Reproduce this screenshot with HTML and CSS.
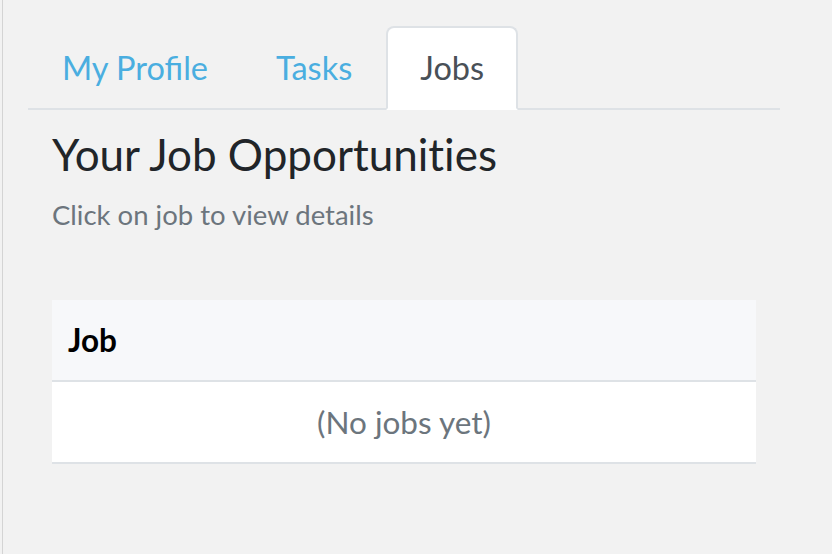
FILE: index.html
```html
<!DOCTYPE html>
<html>
<head>
<meta charset="utf-8">
<link rel="stylesheet" href="styles.css">
</head>
<body>
<div class="frame">
  <div class="panel">
    <ul class="tabs">
      <li class="tab">My Profile</li>
      <li class="tab">Tasks</li>
      <li class="tab active">Jobs</li>
    </ul>
    <div class="content">
      <h2 class="title">Your Job Opportunities</h2>
      <p class="subtitle">Click on job to view details</p>
      <table class="jobs">
        <thead><tr><th>Job</th></tr></thead>
        <tbody><tr><td class="empty">(No jobs yet)</td></tr></tbody>
      </table>
    </div>
  </div>
</div>
</body>
</html>
```
FILE: styles.css
```css
* { box-sizing: border-box; }
html, body { margin: 0; padding: 0; }
body {
  background: #f2f2f2;
  font-family: Lato, "Open Sans", sans-serif;
  width: 832px;
  height: 554px;
  overflow: hidden;
}
.frame {
  margin-left: 2px;
  border-left: 1px solid #d4d4d4;
  height: 554px;
  padding-top: 26px;
}
.panel {
  margin-left: 25px;
  width: 752px;
}
.tabs {
  list-style: none;
  margin: 0;
  padding: 0;
  display: flex;
  border-bottom: 2px solid #dee2e6;
}
.tab {
  font-size: 32.5px;
  line-height: 40px;
  padding: 20px 32px;
  border: 2px solid transparent;
  border-radius: 8px 8px 0 0;
  margin-bottom: -2px;
  color: #4aaee0;
}
.tab.active {
  background: #fff;
  border-color: #dee2e6 #dee2e6 #fff;
  color: #495057;
}
.content {
  padding: 0 24px;
}
.title {
  margin: 20px 0 0;
  font-size: 44px;
  font-weight: 400;
  line-height: 48px;
  color: #212529;
  font-variant-ligatures: none;
}
.subtitle {
  margin: 19px 0 0;
  font-size: 27.5px;
  line-height: 36px;
  color: #6c757d;
}
.jobs {
  margin-top: 67px;
  width: 704px;
  border-collapse: separate;
  border-spacing: 0;
}
.jobs th,
.jobs td {
  padding: 0 16px;
  height: 82px;
  line-height: 80px;
  border-bottom: 2px solid #dee2e6;
}
.jobs th {
  background: #f7f8fa;
  text-align: left;
  font-size: 31.5px;
  font-weight: 700;
  color: #000;
}
.jobs td {
  background: #fff;
  font-size: 31.5px;
  color: #6c757d;
  text-align: center;
}
```
